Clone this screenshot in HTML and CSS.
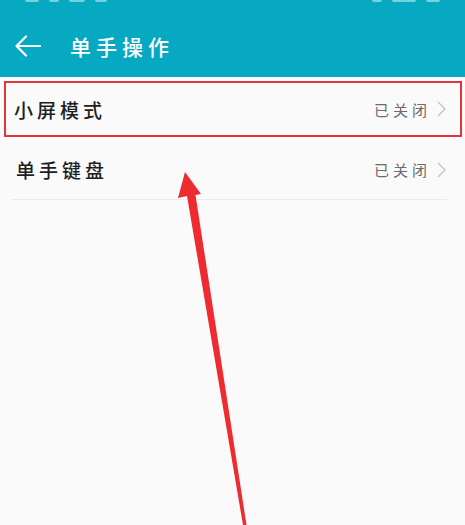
FILE: index.html
```html
<!DOCTYPE html>
<html lang="zh">
<head>
<meta charset="utf-8">
<link rel="stylesheet" href="styles.css">
</head>
<body>
<div class="app">
  <header class="appbar">
    <div class="status">
      <div class="st-left"><span class="sb w14"></span><span class="sb w10"></span><span class="sb w16"></span><span class="sb w12 round"></span></div>
      <div class="st-right"><span class="sb w10"></span><span class="sb w24"></span><span class="sb w14"></span></div>
    </div>
    <div class="toolbar">
      <svg class="back" width="26" height="22" viewBox="0 0 26 22"><path d="M11 1.5 L1.5 11 L11 20.5 M1.5 11 H25" fill="none" stroke="#fff" stroke-width="2.2" stroke-linecap="round" stroke-linejoin="round"/></svg>
      <h1 class="title">单手操作</h1>
    </div>
  </header>
  <main class="list">
    <div class="row highlighted">
      <span class="label">小屏模式</span>
      <span class="value">已关闭</span>
      <svg class="chev" width="9" height="16" viewBox="0 0 9 16"><path d="M1 1 L8 8 L1 15" fill="none" stroke="#c4c4c4" stroke-width="1.4"/></svg>
    </div>
    <div class="row plain">
      <span class="label">单手键盘</span>
      <span class="value">已关闭</span>
      <svg class="chev" width="9" height="16" viewBox="0 0 9 16"><path d="M1 1 L8 8 L1 15" fill="none" stroke="#c4c4c4" stroke-width="1.4"/></svg>
    </div>
  </main>
  <svg class="pointer" width="465" height="525" viewBox="0 0 465 525"><path d="M185 172 L201 194 L195.5 195 L246.5 525 L243 525 L187 196 L178 198 Z" fill="#ee2b30"/></svg>
</div>
</body>
</html>
```
FILE: styles.css
```css
html, body {
  margin: 0;
  padding: 0;
  background: #fafafa;
}
body {
  font-family: "Noto Sans CJK SC", "Noto Sans", sans-serif;
  width: 465px;
  height: 525px;
  overflow: hidden;
}
.app {
  position: relative;
  width: 465px;
  height: 525px;
}
.appbar {
  background: #06a9c1;
  height: 77px;
  display: flex;
  flex-direction: column;
}
.status {
  height: 3px;
  display: flex;
  justify-content: space-between;
  padding: 0 25px;
  overflow: hidden;
}
.st-left, .st-right {
  display: flex;
  gap: 10px;
  align-items: flex-start;
}
.sb {
  display: block;
  height: 2px;
  background: rgba(255,255,255,0.45);
  border-radius: 0 0 2px 2px;
}
.sb.round { border-radius: 0 0 6px 6px; }
.w10 { width: 10px; }
.w12 { width: 12px; }
.w14 { width: 14px; }
.w16 { width: 16px; }
.w24 { width: 24px; }
.toolbar {
  flex: 1;
  display: flex;
  align-items: center;
  padding: 12px 0 0 15px;
}
.back { display: block; }
.title {
  margin: 0 0 0 29px;
  color: #fff;
  font-size: 21px;
  font-weight: 500;
  letter-spacing: 5px;
  line-height: 1;
}
.list {
  padding-top: 4px;
}
.row {
  display: flex;
  align-items: center;
}
.label {
  flex: 1;
  font-size: 19px;
  font-weight: 500;
  color: #1e1e1e;
  letter-spacing: 4px;
}
.value {
  font-size: 15px;
  color: #6b6b6b;
  letter-spacing: 4px;
  margin-right: 6px;
}
.chev { display: block; }
.highlighted {
  margin: 0 3px 0 4px;
  height: 52px;
  border: 2px solid #e2343b;
  padding: 0 14px 0 8px;
}
.plain {
  margin: 3px 18px 0 12px;
  height: 59px;
  border-bottom: 1px solid #ebebeb;
  padding: 0 1px 0 4px;
}
.pointer {
  position: absolute;
  left: 0;
  top: 0;
  pointer-events: none;
}
```
